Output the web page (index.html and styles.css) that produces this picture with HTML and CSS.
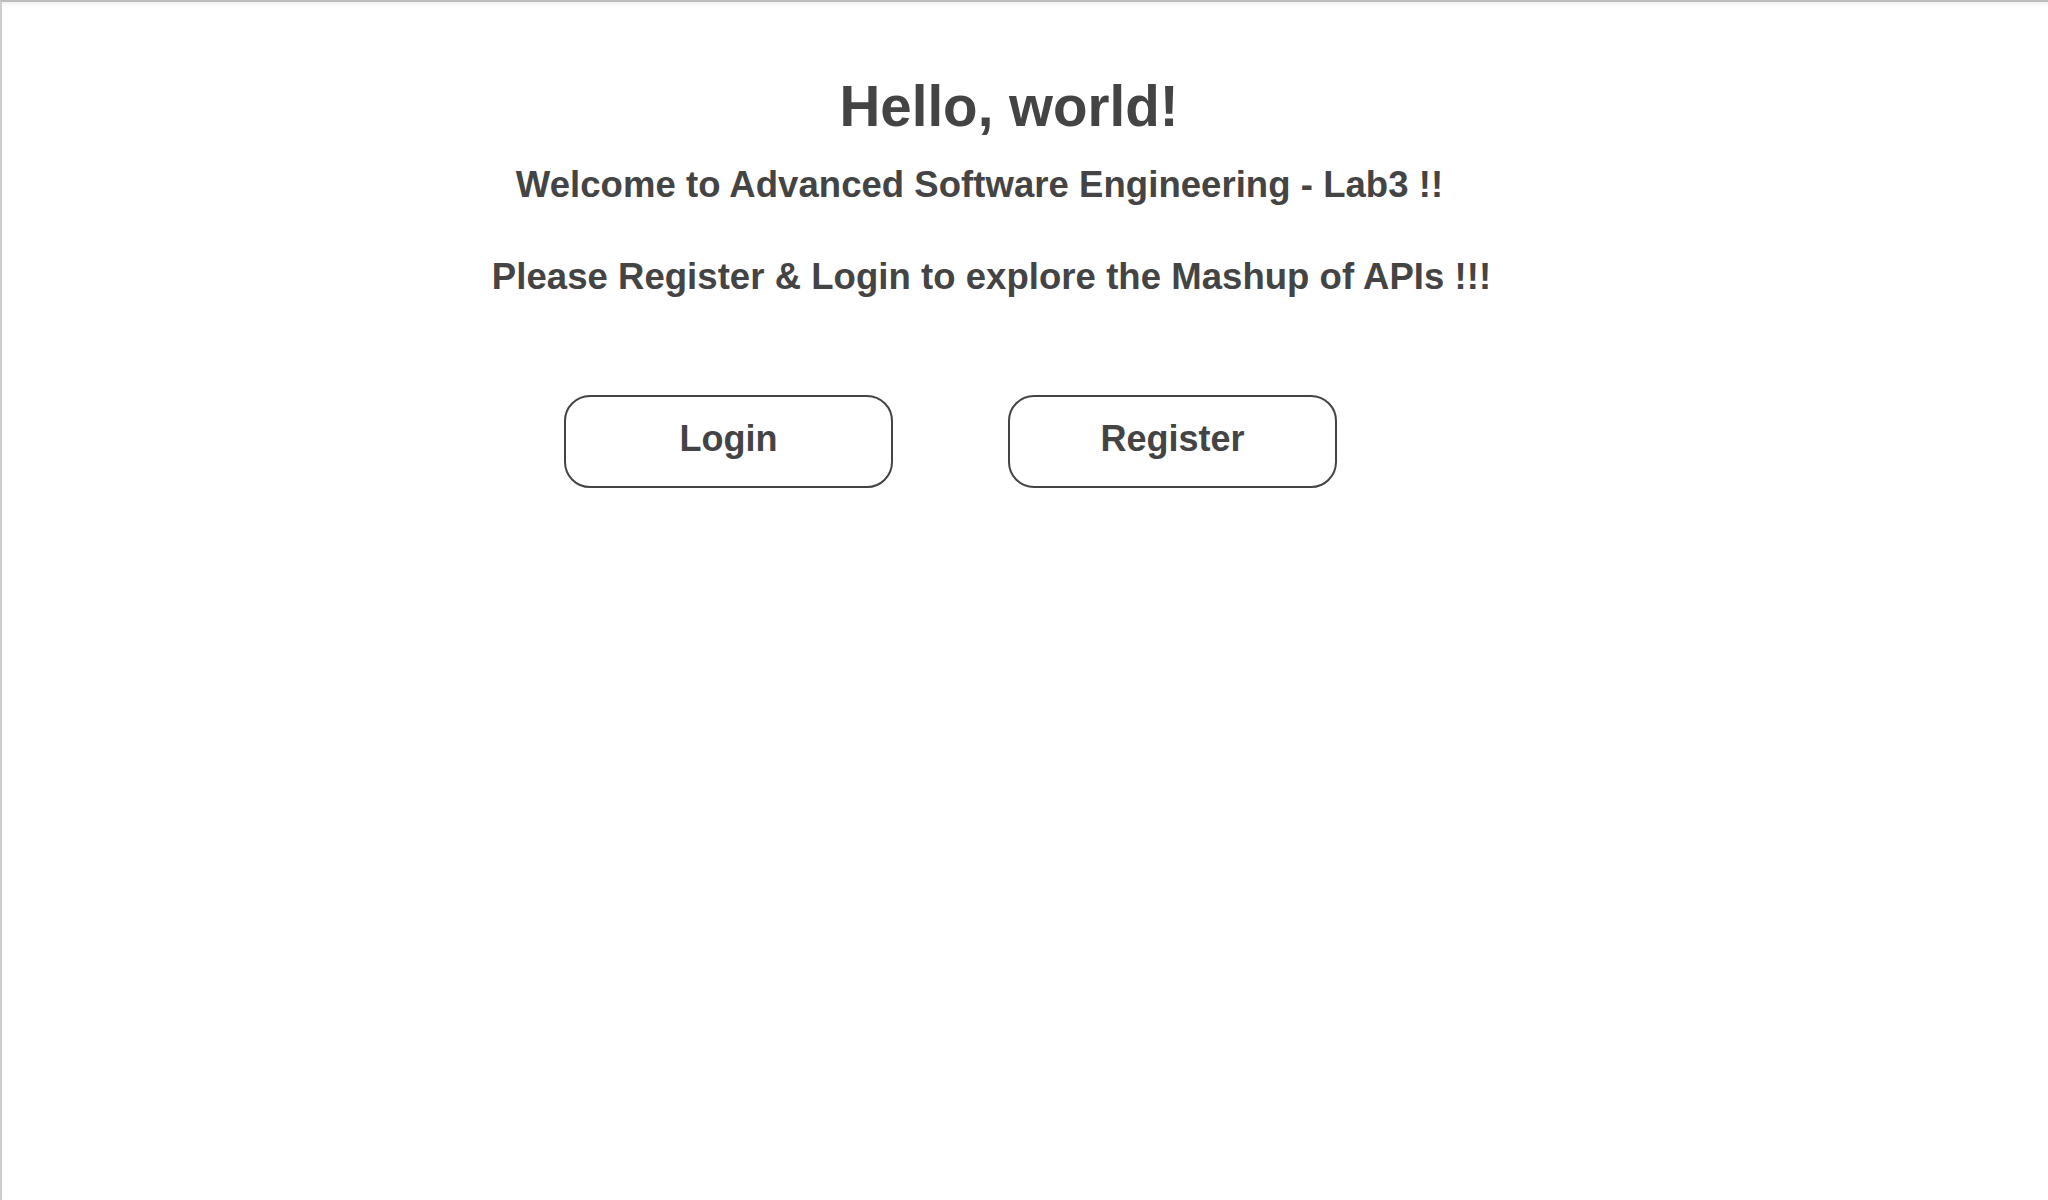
FILE: index.html
```html
<!DOCTYPE html>
<html lang="en">
<head>
<meta charset="utf-8">
<title>Hello, world!</title>
<link rel="stylesheet" href="styles.css">
</head>
<body>
<div class="frame">
  <main class="content">
    <h1 class="title">Hello, world!</h1>
    <h3 class="line line-welcome">Welcome to Advanced Software Engineering - Lab3 !!</h3>
    <h3 class="line line-please">Please Register &amp; Login to explore the Mashup of APIs !!!</h3>
    <div class="actions">
      <button class="btn" type="button">Login</button>
      <button class="btn" type="button">Register</button>
    </div>
  </main>
</div>
</body>
</html>
```

FILE: styles.css
```css
html, body {
  margin: 0;
  padding: 0;
  height: 100%;
  background: #ffffff;
}

body {
  font-family: "Liberation Sans", Arial, sans-serif;
  color: #444444;
}

.frame {
  box-sizing: border-box;
  height: 1200px;
  border-top: 2px solid #bdbdbd;
  border-left: 2px solid #cdcdcd;
  box-shadow: inset 0 6px 6px -6px rgba(0, 0, 0, 0.12);
}

.content {
  display: flex;
  flex-direction: column;
  align-items: stretch;
  padding-top: 75px;
}

.title {
  margin: 0;
  font-size: 56.5px;
  line-height: 60px;
  font-weight: 700;
  text-align: center;
  padding-right: 32px;
}

.line {
  margin: 0;
  font-size: 36.5px;
  line-height: 36px;
  font-weight: 700;
  letter-spacing: 0.05px;
  text-align: center;
}

.line-welcome {
  margin-top: 30px;
  padding-right: 91px;
}

.line-please {
  margin-top: 56px;
  padding-right: 67px;
}

.actions {
  display: flex;
  justify-content: center;
  gap: 115px;
  margin-top: 100px;
  padding-right: 149px;
}

.btn {
  box-sizing: border-box;
  width: 329px;
  height: 93px;
  padding: 0 0 6px 0;
  border: 2px solid #444444;
  border-radius: 26px;
  background: #ffffff;
  color: #444444;
  font-family: "Liberation Sans", Arial, sans-serif;
  font-size: 36px;
  font-weight: 700;
  cursor: pointer;
}
```
